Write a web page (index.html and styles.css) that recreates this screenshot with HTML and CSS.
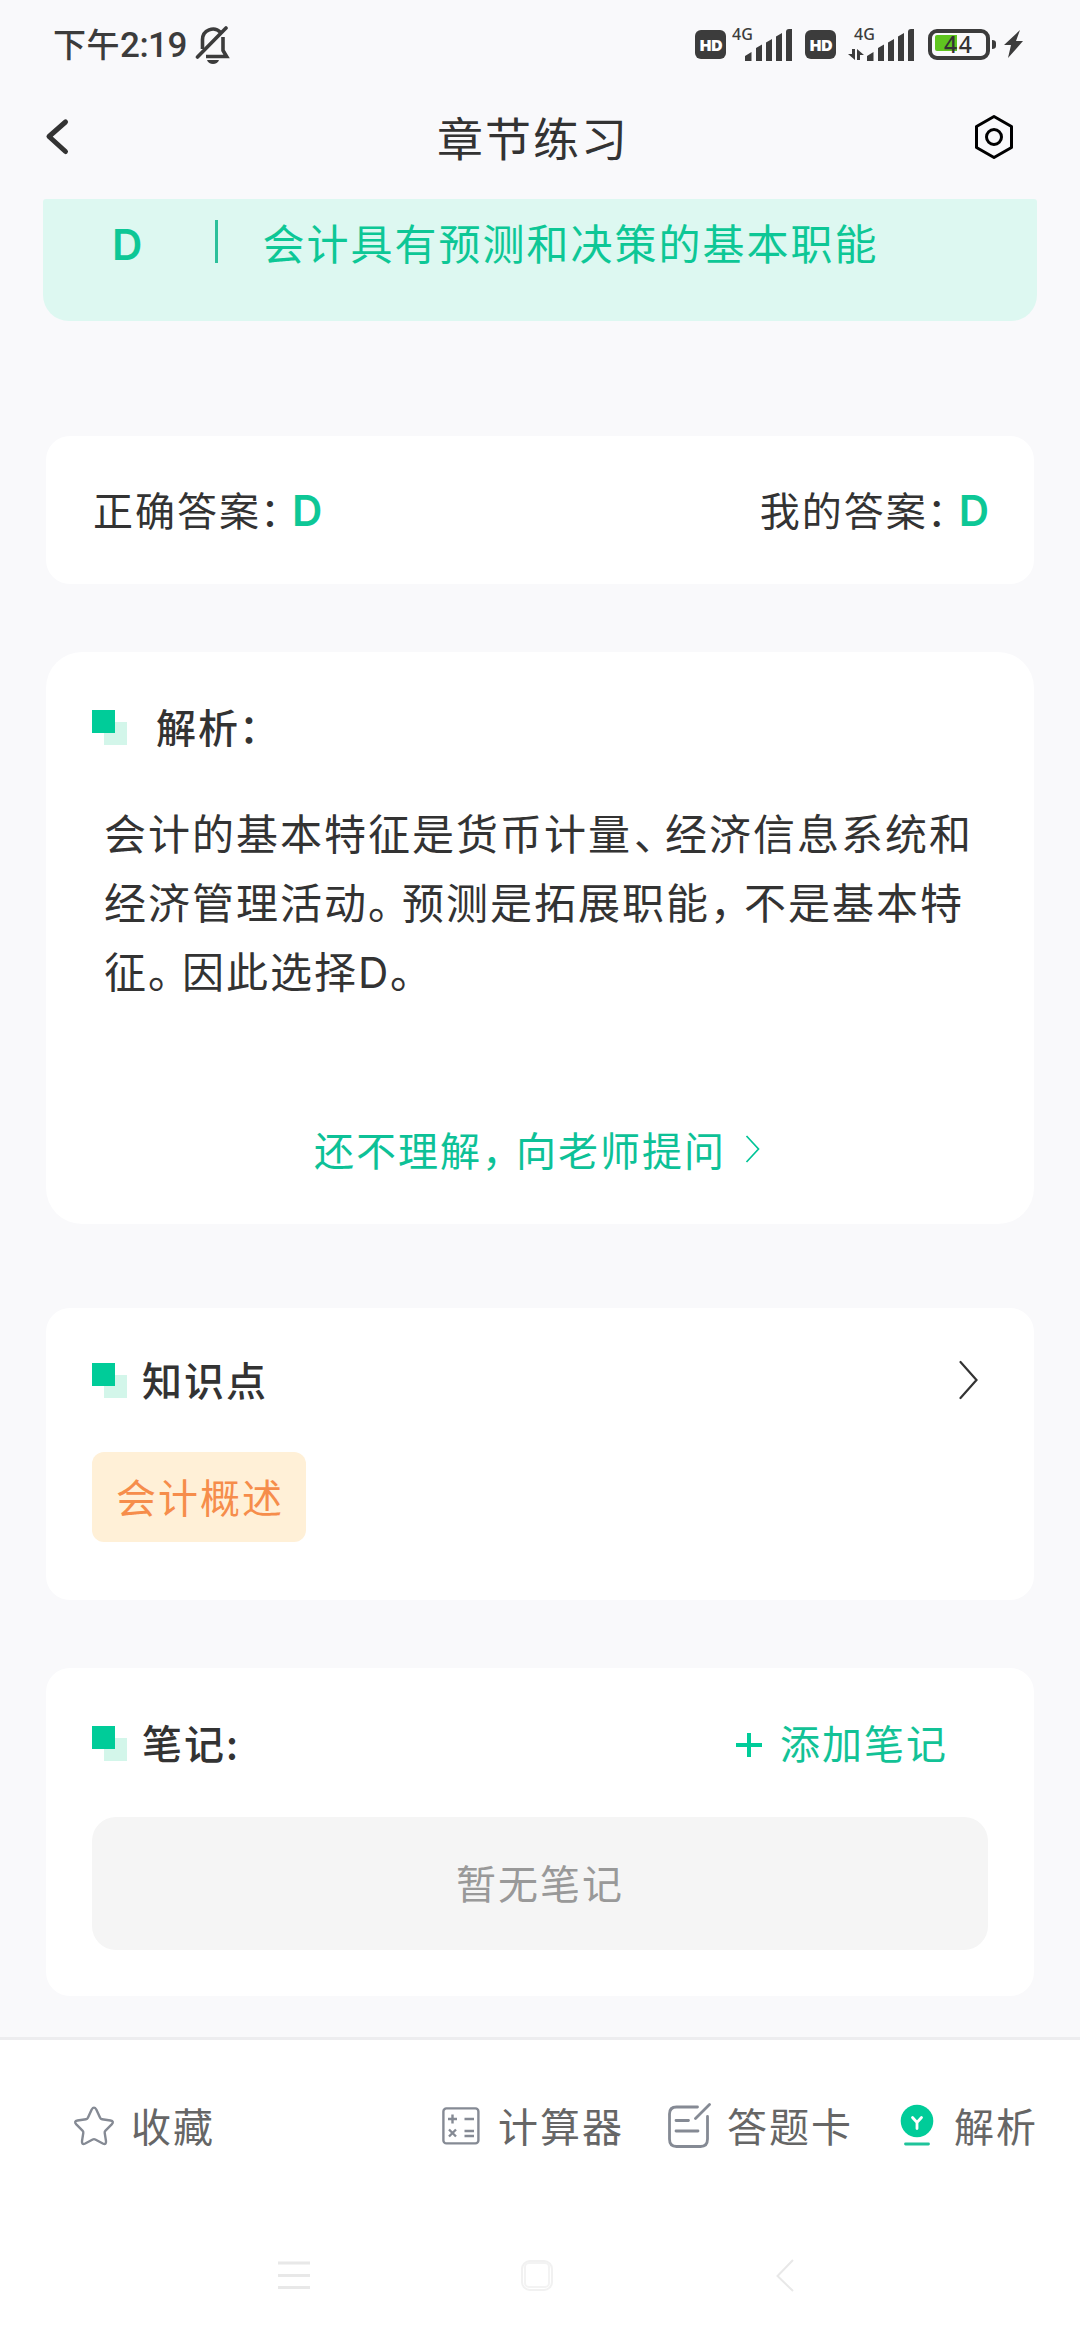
FILE: index.html
```html
<!DOCTYPE html>
<html lang="zh-CN">
<head>
<meta charset="utf-8">
<title>章节练习</title>
<link rel="stylesheet" href="styles.css">
</head>
<body>
<div class="app">
  <div class="status">
    <span class="clock">下午<span class="digits">2:19</span></span>
    <svg class="bell" width="36" height="40" viewBox="0 0 36 40" fill="none" stroke="#3c3c3c" stroke-width="3.6">
      <path d="M7.500 25V15.500a10.500 10.500 0 0 1 18-7.200M28 13v13.500l3.600 6H11"/>
      <path d="M2.500 33L31 4" stroke-linecap="round"/>
      <path d="M12 36h12c-1.500 5.200-10.500 5.200-12 0z" fill="#3c3c3c" stroke="none"/>
    </svg>
    <span class="hd">HD</span>
    <svg class="signal first" width="62" height="46" viewBox="0 -6 62 46" fill="#3c3c3c">
      <text class="net" x="0" y="13">4G</text>
      <path d="M13 34v-5l6.500-4v9zM24 34V21l6-3.500V34zM34 34V15.500l6-3.500V34zM44 34V9.500L50 6V34zM54 34V5q0-3 3-3h3v32z"/>
    </svg>
    <span class="hd">HD</span>
    <svg class="signal second" width="68" height="46" viewBox="0 -6 68 46" fill="#3c3c3c">
      <text class="net" x="6" y="13">4G</text>
      <path d="M4 22h3v11l-7-6h4zM9 33V22l7 6h-4v5z"/>
      <path d="M19 34v-5l6.500-4v9zM30 34V21l6-3.500V34zM40 34V15.500l6-3.500V34zM50 34V9.500L56 6V34zM60 34V5q0-3 3-3h3v32z"/>
    </svg>
    <svg class="battery" width="96" height="34" viewBox="0 0 96 34">
      <rect x="2" y="4" width="58" height="27" rx="7" fill="none" stroke="#3c3c3c" stroke-width="4"/>
      <path d="M9 8h20v16H9q-2 0-2-2V10q0-2 2-2z" fill="#5fc51f"/>
      <path d="M64 13q4 0 4 3v3q0 3-4 3zM92 3L76 18h7l-3 13 15-17h-7z" fill="#3c3c3c"/>
      <text class="level" x="16" y="25.500">44</text>
    </svg>
  </div>

  <div class="header">
    <svg class="back" width="26" height="38" viewBox="0 0 26 38" fill="none" stroke="#333" stroke-width="5" stroke-linecap="round" stroke-linejoin="round"><path d="M20.500 4L4 18.500l16.500 15"/></svg>
    <div class="title">章节练习</div>
    <svg class="gear" width="42" height="46" viewBox="0 0 42 46" fill="none" stroke="#000" stroke-width="3" stroke-linejoin="round"><path d="M21 2.500l17.500 10v21L21 43.500l-17.500-10v-21z"/><circle cx="21" cy="23" r="7.500"/></svg>
  </div>

  <div class="option">
    <b class="letter">D</b><i class="bar"></i><span class="option-text">会计具有预测和决策的基本职能</span>
  </div>

  <div class="card answers">
    <div>正确答案<span class="colon">：</span><b>D</b></div>
    <div>我的答案<span class="colon">：</span><b>D</b></div>
  </div>

  <div class="card analysis">
    <div class="heading wide"><i class="mark"></i>解析<span class="colon">：</span></div>
    <div class="body">
      <p>会计的基本特征是货币计量<span class="dun">、</span>经济信息系统和</p>
      <p>经济管理活动<span class="stop">。</span>预测是拓展职能<span class="stop">，</span>不是基本特</p>
      <p>征<span class="stop">。</span>因此选择<span class="latin">D</span><span class="stop">。</span></p>
    </div>
    <div class="ask">还不理解<span class="stop">，</span>向老师提问<svg width="16" height="30" viewBox="0 0 16 30" fill="none" stroke="#00c497" stroke-width="1.700"><path d="M1.500 2l12 13-12 13"/></svg></div>
  </div>

  <div class="card knowledge">
    <div class="heading"><i class="mark"></i>知识点<svg class="more" width="20" height="40" viewBox="0 0 20 40" fill="none" stroke="#333" stroke-width="2.200" stroke-linecap="round"><path d="M1.500 2l16 18-16 18"/></svg></div>
    <div class="tag">会计概述</div>
  </div>

  <div class="card notes">
    <div class="heading"><i class="mark"></i>笔记:
      <span class="add"><svg width="26" height="26" viewBox="0 0 26 26" stroke="#00cc99" stroke-width="4"><path d="M13 1v24M0 13h26"/></svg>添加笔记</span>
    </div>
    <div class="empty">暂无笔记</div>
  </div>

  <div class="toolbar">
    <div class="tool star">
      <svg width="42" height="42" viewBox="0 0 42 42" fill="none" stroke="#858a94" stroke-width="2.400" stroke-linejoin="round"><path d="M18.700 4.500q2.300-3.800 4.600 0l3.800 8.300q.6 1.200 2 1.400l8.400 1.300q4 .8 1.200 3.900l-6.200 6.200q-1 1-.8 2.300l1.300 8.200q.4 4.200-3.200 2.400l-7.500-4q-1.300-.7-2.600 0l-7.500 4q-3.600 1.800-3.200-2.400l1.300-8.200q.2-1.300-.8-2.300l-6.200-6.200q-2.800-3.100 1.200-3.900l8.400-1.300q1.400-.2 2-1.400z"/></svg><span>收藏</span>
    </div>
    <div class="tool calc">
      <svg width="38" height="38" viewBox="0 0 38 38" fill="none" stroke="#858a94" stroke-width="2.400"><rect x="1.400" y="1.400" width="35" height="35" rx="3"/><path d="M6 12h9M10.500 7.500v9M22.500 12H32M7 22.500l7 7M14 22.500l-7 7M22.500 24H32M22.500 29H32"/></svg><span>计算器</span>
    </div>
    <div class="tool sheet">
      <svg width="44" height="46" viewBox="0 0 44 46" fill="none" stroke="#858a94" stroke-width="2.800" stroke-linecap="round"><path d="M29.500 4H8.500Q1.500 4 1.500 11v25q0 7.500 7 7.500h24q7 0 7-7.500V13.500M27.500 15.500l14-14M8 17.500h12.500M8 28h22"/></svg><span>答题卡</span>
    </div>
    <div class="tool explain">
      <svg width="34" height="44" viewBox="0 0 34 44" fill="none" stroke-linecap="round"><circle cx="17" cy="17" r="16.300" fill="#00cc99"/><path d="M12.500 13.500l4.500 5 4.500-5M17 18.500v6" stroke="#fff" stroke-width="2.800"/><path d="M5.500 40h23" stroke="#1fc39a" stroke-width="2.800"/></svg><span>解析</span>
    </div>
  </div>

  <div class="sysnav">
    <svg class="menu" width="34" height="34" viewBox="0 0 34 34" stroke="#e8e8e8" stroke-width="3"><path d="M1 5h32M1 17.500h32M1 29.500h32"/></svg>
    <svg class="home" width="34" height="34" viewBox="0 0 34 34" fill="none" stroke-width="2"><rect x="2" y="3" width="30" height="29" rx="8" stroke="#f1f1f1"/><rect x="5" y="5" width="24" height="24" rx="4" stroke="#f3f3f3"/></svg>
    <svg class="return" width="20" height="36" viewBox="0 0 20 36" fill="none" stroke="#e8e8e8" stroke-width="2"><path d="M18 2L2.500 18 18 33"/></svg>
  </div>
</div>
</body>
</html>
```
FILE: styles.css
```css
* { box-sizing: border-box; margin: 0; padding: 0; }
body {
  width: 1080px;
  height: 2340px;
  overflow: hidden;
  background: #f9f9fb;
  color: #333;
  font-family: "Noto Sans CJK SC", sans-serif;
  font-size: 40px;
  letter-spacing: 2px;
  white-space: nowrap;
}
i { font-style: normal; }
svg { display: block; flex: none; }
.app { display: flex; flex-direction: column; height: 2340px; }

.status { display: flex; align-items: center; height: 88px; padding-left: 53px; color: #3c3c3c; }
.clock { width: 142px; font-size: 33px; font-weight: 500; letter-spacing: 0.500px; line-height: 40px; }
.digits { font-family: Roboto, sans-serif; font-size: 35px; letter-spacing: -0.500px; }
.hd {
  width: 31px; height: 29px; border-radius: 6px; background: #3c3c3c; color: #fff;
  font: 800 16.500px/29px "Open Sans", sans-serif; letter-spacing: -1px; text-align: center;
}
.bell { margin-right: 464px; }
.first { margin: 0 11px 0 6px; }
.second { margin: 0 12px 0 12px; }
.net { font: 500 16px "Noto Sans", sans-serif; letter-spacing: 0; }
.level { font: 500 23px "Noto Sans", sans-serif; letter-spacing: 1.500px; fill: #333; }

.header { display: flex; align-items: center; justify-content: space-between; height: 111px; padding: 0 65px 13px 45px; }
.title { font-size: 46px; letter-spacing: 2px; padding: 0 0 2px 22px; }

.option {
  display: flex; align-items: center; height: 122px; margin: 0 43px; padding: 0 0 37px 69px;
  border-radius: 3px 3px 26px 26px; background: #ddf8f1; color: #0dc796; font-size: 42px;
}
.letter { width: 102.500px; padding-top: 5px; font: 600 42px Inter, sans-serif; }
.bar { width: 3px; height: 43px; margin-right: 45px; background: #2cc09b; }

.card { margin: 0 46px; border-radius: 24px; background: #fff; }
.answers { display: flex; align-items: center; justify-content: space-between; height: 148px; margin-top: 115px; padding: 0 45px 3px 47px; }
.answers b { color: #0dc796; letter-spacing: 0; font: 600 42px Inter, sans-serif; }
.colon, .dun, .stop { display: inline-block; letter-spacing: 0; font-feature-settings: "halt"; }
.colon { width: 31px; text-indent: -1px; }

.analysis { height: 572px; margin-top: 68px; padding: 49px 46px 0; border-radius: 36px; }
.heading { display: flex; align-items: center; height: 50px; font-weight: 500; }
.mark {
  width: 35px; height: 35px; margin: 2px 15px 0 0;
  background: linear-gradient(#00cc99, #00cc99) 0 0 / 23px 23px no-repeat, linear-gradient(#d3f6ea, #d3f6ea) 12px 12px / 23px 23px no-repeat;
}
.wide .mark { margin-right: 29px; }
.body { margin-top: 46px; padding-left: 12px; font-size: 42px; line-height: 69px; }
.dun { width: 33px; padding-left: 2px; }
.stop { width: 34px; }
.latin { display: inline-block; width: 32px; font-family: Inter, sans-serif; letter-spacing: 0; }
.ask { display: flex; align-items: center; height: 60px; margin-top: 112px; padding-left: 222px; color: #0dc197; }
.ask svg { margin-left: 19px; }

.knowledge { height: 292px; margin-top: 84px; padding: 46px; }
.more { margin: 2px 9px 0 auto; }
.tag { width: 214px; height: 90px; margin-top: 48px; border-radius: 12px; background: #fff0d7; color: #f68d4b; line-height: 88px; padding-left: 24px; }

.notes { height: 328px; margin-top: 68px; padding: 49px 46px 0; }
.add { display: flex; align-items: center; gap: 18px; margin-left: auto; margin-right: 40px; color: #12c296; font-weight: 400; }
.add svg { margin-top: 5px; }
.empty { height: 133px; margin-top: 50px; border-radius: 24px; background: #f5f5f5; color: #999; line-height: 131px; text-align: center; }

.toolbar { display: flex; align-items: center; height: 175px; margin-top: 41px; padding-left: 73px; border-top: 3px solid #ededef; background: #fff; color: #666; }
.tool { display: flex; align-items: center; }
.tool span { margin-top: -3px; }
.star { gap: 16px; width: 369px; }
.calc { gap: 18px; width: 226px; }
.sheet { gap: 15px; width: 232px; }
.explain { gap: 20px; }
.sysnav { display: flex; flex: 1; padding: 46px 0 0 277px; background: #fff; }
.home { margin-left: 209px; }
.return { margin-left: 221px; }
```
